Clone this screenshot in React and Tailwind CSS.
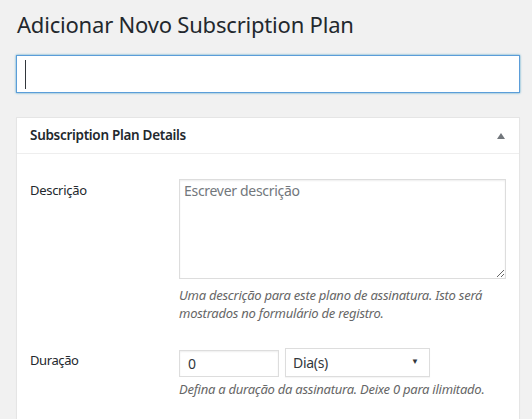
import React from "react";

const font = { fontFamily: '"Noto Sans", "Open Sans", sans-serif' };

const App = () => {
  return (
    <div
      className="min-h-screen bg-[#f1f1f1] pl-4 pr-3 pt-[10px] text-[#23282d]"
      style={font}
    >
      {/* Title */}
      <h1 className="pl-px text-[22px] leading-[29px] font-normal tracking-[-0.2px]">
        Adicionar Novo Subscription Plan
      </h1>

      {/* Plan title input */}
      <div className="mt-[16px] flex h-[38px] w-[504px] items-center border border-[#5b9dd9] bg-white pl-[8px] shadow-[0_0_2px_rgba(30,140,190,0.8)]">
        <span className="h-[29px] w-px bg-[#32373c]" />
      </div>

      {/* Details box */}
      <div className="mt-6 w-[504px] border border-[#e5e5e5] bg-white shadow-[0_1px_1px_rgba(0,0,0,0.04)]">
        <div className="flex h-[36px] items-center justify-between border-b border-[#eee] pl-[13px] pr-[14px]">
          <h2 className="text-[13.5px] font-semibold leading-none tracking-[-0.3px]">
            Subscription Plan Details
          </h2>
          <svg width="8" height="6" viewBox="0 0 8 6" className="mt-px">
            <path d="M4 0 L8 6 L0 6 Z" fill="#72777c" />
          </svg>
        </div>

        <div className="grid grid-cols-[149px_1fr] pl-[13px] pr-[13px] pt-[25px] pb-6">
          {/* Descrição */}
          <label className="pt-[2px] text-[13px] leading-[18px] tracking-[-0.3px]">
            Descrição
          </label>
          <div>
            <textarea
              placeholder="Escrever descrição"
              className="block h-[100px] w-[327px] border border-[#ddd] px-[4px] py-[1px] text-[14px] leading-[20px] tracking-[-0.3px] text-[#32373c] shadow-[inset_0_1px_2px_rgba(0,0,0,0.07)] outline-none placeholder:text-[#72777c]"
              style={font}
            />
            <p className="mt-[8px] text-[13px] italic leading-[17.5px] tracking-[-0.25px] text-[#666]">
              Uma descrição para este plano de assinatura. Isto será
              <br />
              mostrados no formulário de registro.
            </p>
          </div>

          {/* Duração */}
          <label className="mt-[28px] pt-[1px] text-[13px] leading-[18px] tracking-[-0.4px]">
            Duração
          </label>
          <div className="mt-[26px]">
            <div className="flex items-center gap-[6px]">
              <input
                type="text"
                defaultValue="0"
                className="mt-[2px] h-[27px] w-[100px] border border-[#ddd] px-[8px] text-[14px] text-[#32373c] shadow-[inset_0_1px_2px_rgba(0,0,0,0.07)] outline-none"
                style={font}
              />
              <div className="relative">
                <select
                  className="h-[29px] w-[145px] appearance-none border border-[#ddd] bg-white px-[7px] text-[14px] tracking-[-0.3px] text-[#32373c] shadow-[0_1px_1px_rgba(0,0,0,0.04)] outline-none"
                  style={font}
                  defaultValue="d"
                >
                  <option value="d">Dia(s)</option>
                  <option value="w">Semana(s)</option>
                  <option value="m">Mês(es)</option>
                  <option value="y">Ano(s)</option>
                </select>
                <span className="pointer-events-none absolute right-[11px] top-[9px] text-[8px] leading-none text-[#32373c]">
                  ▼
                </span>
              </div>
            </div>
            <p className="mt-[4px] text-[13px] italic leading-[17.5px] tracking-[-0.25px] text-[#666]">
              Defina a duração da assinatura. Deixe 0 para ilimitado.
            </p>
          </div>
        </div>
      </div>
    </div>
  );
};

export default App;
